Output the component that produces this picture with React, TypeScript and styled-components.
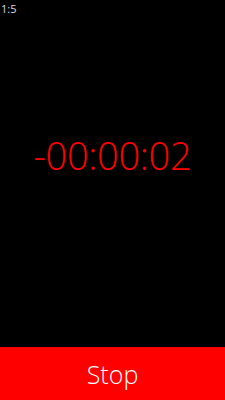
import styled, { createGlobalStyle } from "styled-components";

const GlobalStyle = createGlobalStyle`
  html, body {
    margin: 0;
    padding: 0;
    background: #000;
  }
  #root {
    height: 400px;
  }
`;

const App = () => {
  return <Screen>
    <GlobalStyle />
    <StatusBar>1:5</StatusBar>
    <TimerArea>
      <TimerText>-00:00:02</TimerText>
    </TimerArea>
    <StopButton>Stop</StopButton>
  </Screen>
};

const Screen = styled.div`
  width: 225px;
  height: 400px;
  display: flex;
  flex-direction: column;
  background: #000;
  font-family: "Open Sans", "DejaVu Sans", sans-serif;
`;

const StatusBar = styled.div`
  height: 18px;
  padding-left: 1px;
  color: #ddd;
  font-size: 11px;
  line-height: 18px;
`;

const TimerArea = styled.div`
  flex: 1;
  display: flex;
  align-items: center;
  justify-content: center;
  padding-bottom: 56px;
`;

const TimerText = styled.span`
  color: #ff0000;
  font-size: 38px;
  font-weight: 300;
  letter-spacing: -0.3px;
`;

const StopButton = styled.button`
  height: 53px;
  border: none;
  margin: 0;
  background: #ff0000;
  color: #fff;
  font-family: inherit;
  font-size: 25px;
  font-weight: 300;
  padding: 0;
`;

export default App;
